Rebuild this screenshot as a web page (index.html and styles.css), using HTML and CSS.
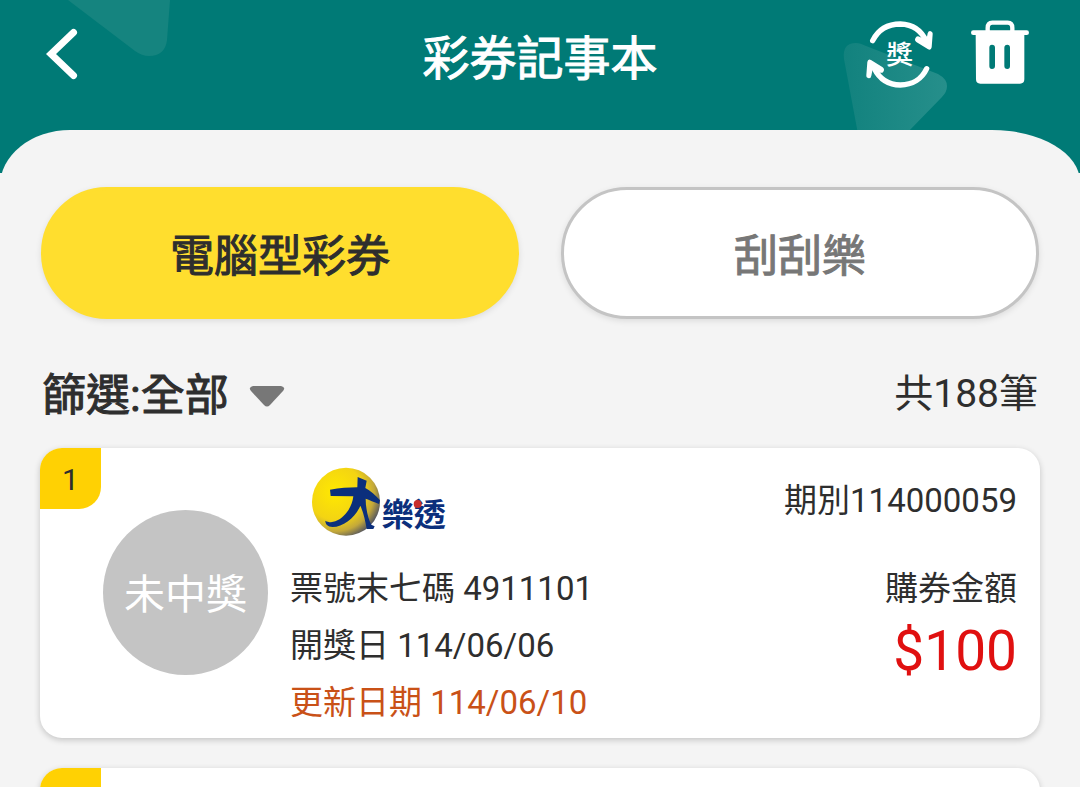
FILE: index.html
```html
<!DOCTYPE html>
<html lang="zh-Hant">
<head>
<meta charset="utf-8">
<meta name="viewport" content="width=device-width, initial-scale=1">
<title>彩券記事本</title>
<link rel="stylesheet" href="styles.css">
</head>
<body>
<div class="screen">
  <header class="header">
    <svg class="deco deco-left" width="180" height="60" viewBox="0 0 180 60" aria-hidden="true">
      <path d="M68 0H170L167 40Q165 56 149 56Q142 56 135 51Z" fill="#15847f"/>
    </svg>
    <svg class="deco deco-right" width="240" height="134" viewBox="0 0 240 134" aria-hidden="true">
      <defs>
        <linearGradient id="glow" x1="0" y1="0" x2="1" y2="0">
          <stop offset="0" stop-color="#12827e"/>
          <stop offset="1" stop-color="#268f8b"/>
        </linearGradient>
      </defs>
      <path d="M4 59Q2 43 16 43Q20 43 26 46L98 74Q107 79 107 86Q107 92 102 97L66 134H18Z" fill="url(#glow)"/>
    </svg>
    <button class="icon-button back" type="button" aria-label="返回">
      <svg width="32" height="52" viewBox="0 0 32 52" aria-hidden="true">
        <path d="M27.500 4.500L5 26L27.500 47.500" fill="none" stroke="#fff" stroke-width="7" stroke-linecap="round"/>
      </svg>
    </button>
    <h1 class="title">彩券記事本</h1>
    <div class="actions">
      <button class="icon-button" type="button" aria-label="更新獎項">
        <svg width="68" height="68" viewBox="0 0 204 204" aria-hidden="true">
          <g fill="none" stroke="#fff" stroke-width="16" stroke-linecap="round">
            <path d="M20 62C38 26 68 12 103 12C141 13 168 34 182 66"/>
            <path d="M182 146C168 176 140 195 103 195C66 195 40 176 24 144"/>
          </g>
          <path d="M192 33Q201 35 200 43L197 82Q195 93 185 87L151 66Q144 60 149 53Q154 46 162 51L181 60L185 40Q187 33 192 33Z" fill="#fff"/>
          <path d="M8 175Q0 173 1 165L4 126Q6 115 15 120L50 142Q57 148 52 155Q48 161 40 157L20 148L16 167Q15 175 8 175Z" fill="#fff"/>
          <text x="101" y="132" class="refresh-text" text-anchor="middle">獎</text>
        </svg>
      </button>
      <button class="icon-button" type="button" aria-label="刪除">
        <svg width="58" height="64" viewBox="0 0 174 192" aria-hidden="true">
          <path d="M50 36V24Q50 8 64 8H110Q124 8 124 24V36" fill="none" stroke="#fff" stroke-width="13"/>
          <path d="M7 38H167" stroke="#fff" stroke-width="14" stroke-linecap="round"/>
          <path fill-rule="evenodd" fill="#fff" d="M14 38H160V178Q160 191 147 191H28Q15 191 15 178ZM55 83V138Q55 147 63 147Q72 147 72 138V83Q72 74 63 74Q55 74 55 83ZM100 83V138Q100 147 109 147Q117 147 117 138V83Q117 74 109 74Q100 74 100 83Z"/>
        </svg>
      </button>
    </div>
  </header>

  <main class="sheet">
    <div class="tabs">
      <button class="tab tab-active" type="button">電腦型彩券</button>
      <button class="tab" type="button">刮刮樂</button>
    </div>

    <div class="toolbar">
      <div class="filter">
        <label for="filter">篩選:</label>
        <select id="filter" class="filter-select">
          <option>全部</option>
        </select>
        <svg class="caret" width="36" height="22" viewBox="0 0 36 22" aria-hidden="true">
          <path d="M4 1H32Q37 2 34 6L21 20Q18 23 15 20L2 6Q-1 2 4 1Z" fill="#777"/>
        </svg>
      </div>
      <span class="count">共188筆</span>
    </div>

    <section class="list">
      <article class="card">
        <span class="badge">1</span>
        <div class="status">未中獎</div>
        <div class="info">
          <svg class="logo" width="138" height="70" viewBox="60 36 414 210" role="img" aria-label="大樂透">
            <defs>
              <radialGradient id="ball" cx="0.34" cy="0.36" r="0.74">
                <stop offset="0" stop-color="#ffe900"/>
                <stop offset="0.55" stop-color="#f3d413"/>
                <stop offset="0.78" stop-color="#c3a83a"/>
                <stop offset="1" stop-color="#3c4468"/>
              </radialGradient>
            </defs>
            <circle cx="168" cy="140" r="102" fill="url(#ball)"/>
            <path d="M203 66L230 77L226 99C240 107 258 121 270 136L267 147C252 141 238 135 227 131C227 160 234 190 244 209L254 214L250 222H230C226 197 220 172 211 152C196 188 160 216 128 216C112 215 106 207 106 197C114 202 126 203 136 199C164 188 186 158 190 124L122 123L120 104C150 99 176 97 202 97Z" fill="#0b2f7c"/>
            <text x="275" y="214" class="logo-text">樂透</text>
            <circle cx="383" cy="147" r="12" fill="#c9302c"/>
          </svg>
          <p class="line">票號末七碼 4911101</p>
          <p class="line">開獎日 114/06/06</p>
          <p class="line line-updated">更新日期 114/06/10</p>
        </div>
        <div class="summary">
          <p class="issue">期別114000059</p>
          <p class="line">購券金額</p>
          <p class="amount">$100</p>
        </div>
      </article>
      <article class="card">
        <span class="badge"></span>
      </article>
    </section>
  </main>
</div>
</body>
</html>
```
FILE: styles.css
```css
* {
  box-sizing: border-box;
}

body {
  margin: 0;
  background: #f4f4f4;
  color: #2e2e2e;
  font-family: Roboto, "Noto Sans CJK TC", sans-serif;
}

h1,
p {
  margin: 0;
}

button,
select {
  font: inherit;
  color: inherit;
  border: 0;
  padding: 0;
}

svg {
  display: block;
}

.screen {
  height: 100vh;
  overflow: hidden;
}

.header {
  position: relative;
  display: grid;
  grid-template-columns: 1fr auto 1fr;
  align-items: start;
  height: 173px;
  padding: 20px 46px 0;
  background: #007a76;
  color: #fff;
}

.deco {
  position: absolute;
  top: 0;
}

.deco-left {
  left: 0;
}

.deco-right {
  right: 0;
}

.icon-button {
  position: relative;
  background: none;
}

.back {
  justify-self: start;
  padding-top: 8px;
}

.title,
.tab,
.filter {
  font-weight: 400;
  -webkit-text-stroke: 1px currentColor;
}

.title {
  position: relative;
  font-size: 47px;
  line-height: 78px;
}

.actions {
  display: flex;
  align-items: flex-start;
  justify-content: flex-end;
  gap: 37px;
  padding-right: 5px;
}

.refresh-text {
  font-size: 80px;
  font-weight: 500;
  fill: #fff;
}

.sheet {
  position: relative;
  margin-top: -43px;
  padding: 57px 40px 0;
  background: #f4f4f4;
  border-radius: 70px 88px 0 0 / 56px 52px 0 0;
}

.tabs {
  display: grid;
  grid-template-columns: 1fr 1fr;
  gap: 42px;
  padding: 0 1px;
}

.tab {
  height: 132px;
  border: 3px solid #c4c4c4;
  border-radius: 66px;
  background: #fff;
  color: #777;
  font-size: 44px;
  box-shadow: 0 2px 6px rgba(0, 0, 0, 0.1);
}

.tab-active {
  border-color: #ffde2e;
  background: #ffde2e;
  color: #2e2e2e;
}

.toolbar {
  display: flex;
  align-items: flex-start;
  justify-content: space-between;
  height: 129px;
  padding: 45px 2px 0;
}

.filter {
  display: flex;
  align-items: center;
  font-size: 44px;
  line-height: 64px;
}

.filter-select {
  appearance: none;
  background: none;
}

.caret {
  margin-left: 20px;
}

.count {
  font-size: 39px;
  line-height: 60px;
}

.list {
  display: flex;
  flex-direction: column;
  gap: 30px;
}

.card {
  position: relative;
  display: flex;
  min-height: 290px;
  padding: 19px 23px 7px 63px;
  border-radius: 22px;
  background: #fff;
  box-shadow: 0 2px 6px rgba(0, 0, 0, 0.2);
}

.badge {
  position: absolute;
  top: 0;
  left: 0;
  width: 61px;
  height: 61px;
  border-radius: 22px 0;
  background: #ffd103;
  font-size: 30px;
  line-height: 63px;
  text-align: center;
}

.status {
  flex: none;
  width: 165px;
  height: 165px;
  margin-top: 43px;
  border-radius: 50%;
  background: #c4c4c4;
  color: #fff;
  font-size: 41px;
  line-height: 170px;
  text-align: center;
}

.info {
  flex: 1;
  padding-left: 22px;
}

.logo {
  margin: 0 0 23px 20px;
}

.logo-text {
  font-size: 96px;
  font-weight: 700;
  fill: #0b2f7c;
}

.line {
  font-size: 33px;
  line-height: 57px;
}

.line-updated {
  color: #c95117;
}

.summary {
  text-align: right;
}

.issue {
  margin-bottom: 26px;
  font-size: 33px;
  line-height: 67px;
}

.amount {
  color: #e01010;
  font-size: 55px;
  line-height: 68px;
}
```
